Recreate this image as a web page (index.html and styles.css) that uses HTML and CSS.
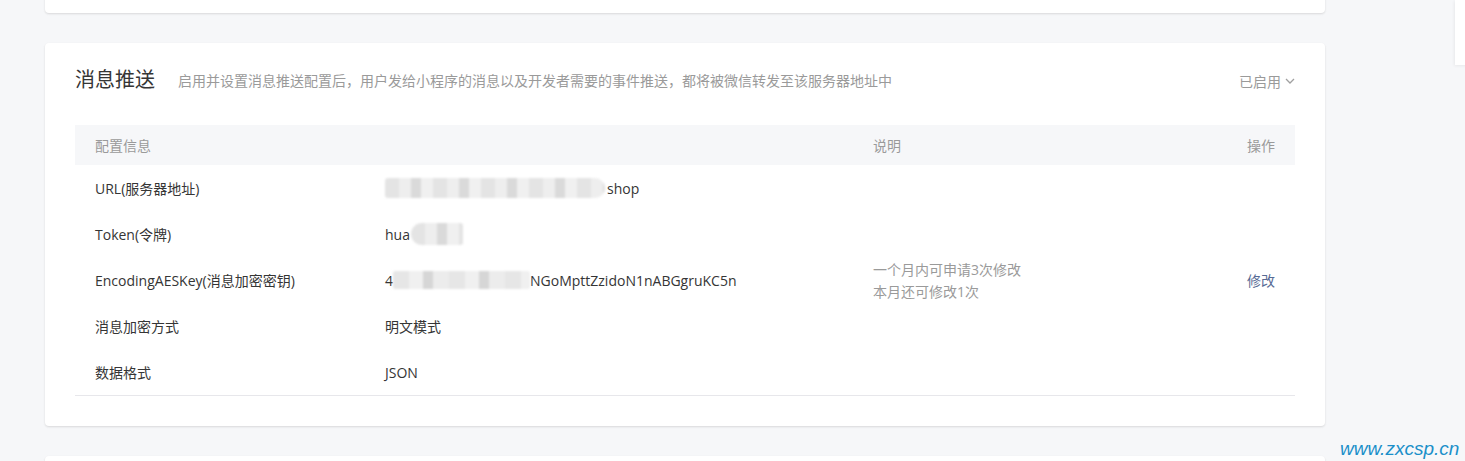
FILE: index.html
```html
<!DOCTYPE html>
<html lang="zh-CN">
<head>
<meta charset="utf-8">
<title>消息推送</title>
<link rel="stylesheet" href="styles.css">
</head>
<body>
<div class="page">
  <div class="card card-top"></div>
  <section class="card">
    <div class="card-head">
      <h2 class="title">消息推送</h2>
      <p class="desc">启用并设置消息推送配置后，用户发给小程序的消息以及开发者需要的事件推送，都将被微信转发至该服务器地址中</p>
      <div class="status">已启用<svg class="chev" width="10" height="6" viewBox="0 0 10 6"><path d="M1 1l4 4 4-4" fill="none" stroke="#a0a0a0" stroke-width="1.3"/></svg></div>
    </div>
    <div class="table">
      <div class="row thead">
        <div class="c1">配置信息</div>
        <div class="c2"></div>
        <div class="c3">说明</div>
        <div class="c4">操作</div>
      </div>
      <div class="tbody">
        <div class="rows">
          <div class="row">
            <div class="c1">URL(服务器地址)</div>
            <div class="c2"><span class="mask m-url"></span>shop</div>
          </div>
          <div class="row">
            <div class="c1">Token(令牌)</div>
            <div class="c2">hua<span class="mask m-token"></span></div>
          </div>
          <div class="row">
            <div class="c1">EncodingAESKey(消息加密密钥)</div>
            <div class="c2">4<span class="mask m-key"></span>NGoMpttZzidoN1nABGgruKC5n</div>
          </div>
          <div class="row">
            <div class="c1">消息加密方式</div>
            <div class="c2">明文模式</div>
          </div>
          <div class="row">
            <div class="c1">数据格式</div>
            <div class="c2">JSON</div>
          </div>
        </div>
        <div class="side">
          <div class="c3 note">一个月内可申请3次修改<br>本月还可修改1次</div>
          <div class="c4"><a class="link">修改</a></div>
        </div>
      </div>
    </div>
  </section>
  <div class="card card-next"></div>
</div>
<div class="float-panel"></div>
<div class="watermark">www.zxcsp.cn</div>
</body>
</html>
```
FILE: styles.css
```css
html, body {
  margin: 0;
  padding: 0;
}
body {
  background: #f6f7f9;
  font-family: "Open Sans", "Noto Sans CJK SC", sans-serif;
  color: #353535;
  width: 1465px;
  height: 461px;
  overflow: hidden;
  position: relative;
}
.page {
  display: flex;
  flex-direction: column;
  gap: 30px;
  padding-left: 45px;
  margin-top: -20px;
}
.card {
  width: 1280px;
  background: #fff;
  border-radius: 4px;
  box-shadow: 0 1px 2px rgba(150, 150, 150, 0.3);
  box-sizing: border-box;
  padding: 22px 30px 30px;
}
.card-top {
  height: 33px;
  padding: 0;
}
.card-next {
  height: 60px;
  padding: 0;
}
.card-head {
  display: flex;
  align-items: center;
  height: 30px;
}
.title {
  margin: 0;
  font-size: 20px;
  font-weight: normal;
  color: #353535;
  line-height: 30px;
}
.desc {
  margin: 0 0 0 23px;
  font-size: 14px;
  color: #9a9a9a;
  flex: 1;
  line-height: 30px;
  padding-top: 2px;
}
.status {
  font-size: 14px;
  color: #9a9a9a;
  display: flex;
  align-items: center;
  gap: 4px;
  padding-top: 2px;
}
.chev {
  display: block;
}
.table {
  margin-top: 30px;
  font-size: 14px;
  border-bottom: 1px solid #e7e7eb;
}
.row {
  display: flex;
  height: 46px;
  align-items: center;
}
.thead {
  height: 40px;
  background: #f6f7f9;
  color: #9a9a9a;
}
.c1 {
  width: 290px;
  padding-left: 20px;
}
.c2 {
  width: 488px;
  display: flex;
  align-items: center;
}
.c3 {
  flex: 1;
}
.c4 {
  width: 120px;
  text-align: right;
  padding-right: 20px;
}
.tbody {
  display: flex;
}
.rows {
  width: 798px;
}
.side {
  flex: 1;
  display: flex;
  align-items: center;
}
.note {
  color: #9a9a9a;
  line-height: 22px;
  padding-top: 2px;
}
.link {
  color: #576b95;
  text-decoration: none;
}
.mask {
  display: inline-block;
  height: 20px;
  border-radius: 10px;
  background:
    repeating-linear-gradient(90deg, #e4e4e4 0 14px, #eeeeee 14px 26px, #dadada 26px 36px, #f0f0f0 36px 48px);
  filter: blur(1.2px);
}
.m-url {
  width: 220px;
  margin-right: 2px;
  border-radius: 4px 12px 12px 4px;
}
.m-token {
  width: 52px;
  height: 22px;
  margin-left: 1px;
  border-radius: 12px 3px 3px 12px;
}
.m-key {
  width: 137px;
  height: 18px;
  border-radius: 2px;
  background:
    repeating-linear-gradient(90deg, #e6e6e6 0 16px, #f0f0f0 16px 30px, #d6d6d6 30px 40px, #ececec 40px 56px);
}
.float-panel {
  position: absolute;
  left: 1455px;
  top: 0;
  width: 20px;
  height: 65px;
  background: #fff;
  box-shadow: -1px 1px 3px rgba(0, 0, 0, 0.06);
}
.watermark {
  position: absolute;
  left: 1340px;
  top: 438px;
  font-family: "Liberation Sans", sans-serif;
  font-style: italic;
  font-size: 19px;
  color: #1a8fc9;
}
```
